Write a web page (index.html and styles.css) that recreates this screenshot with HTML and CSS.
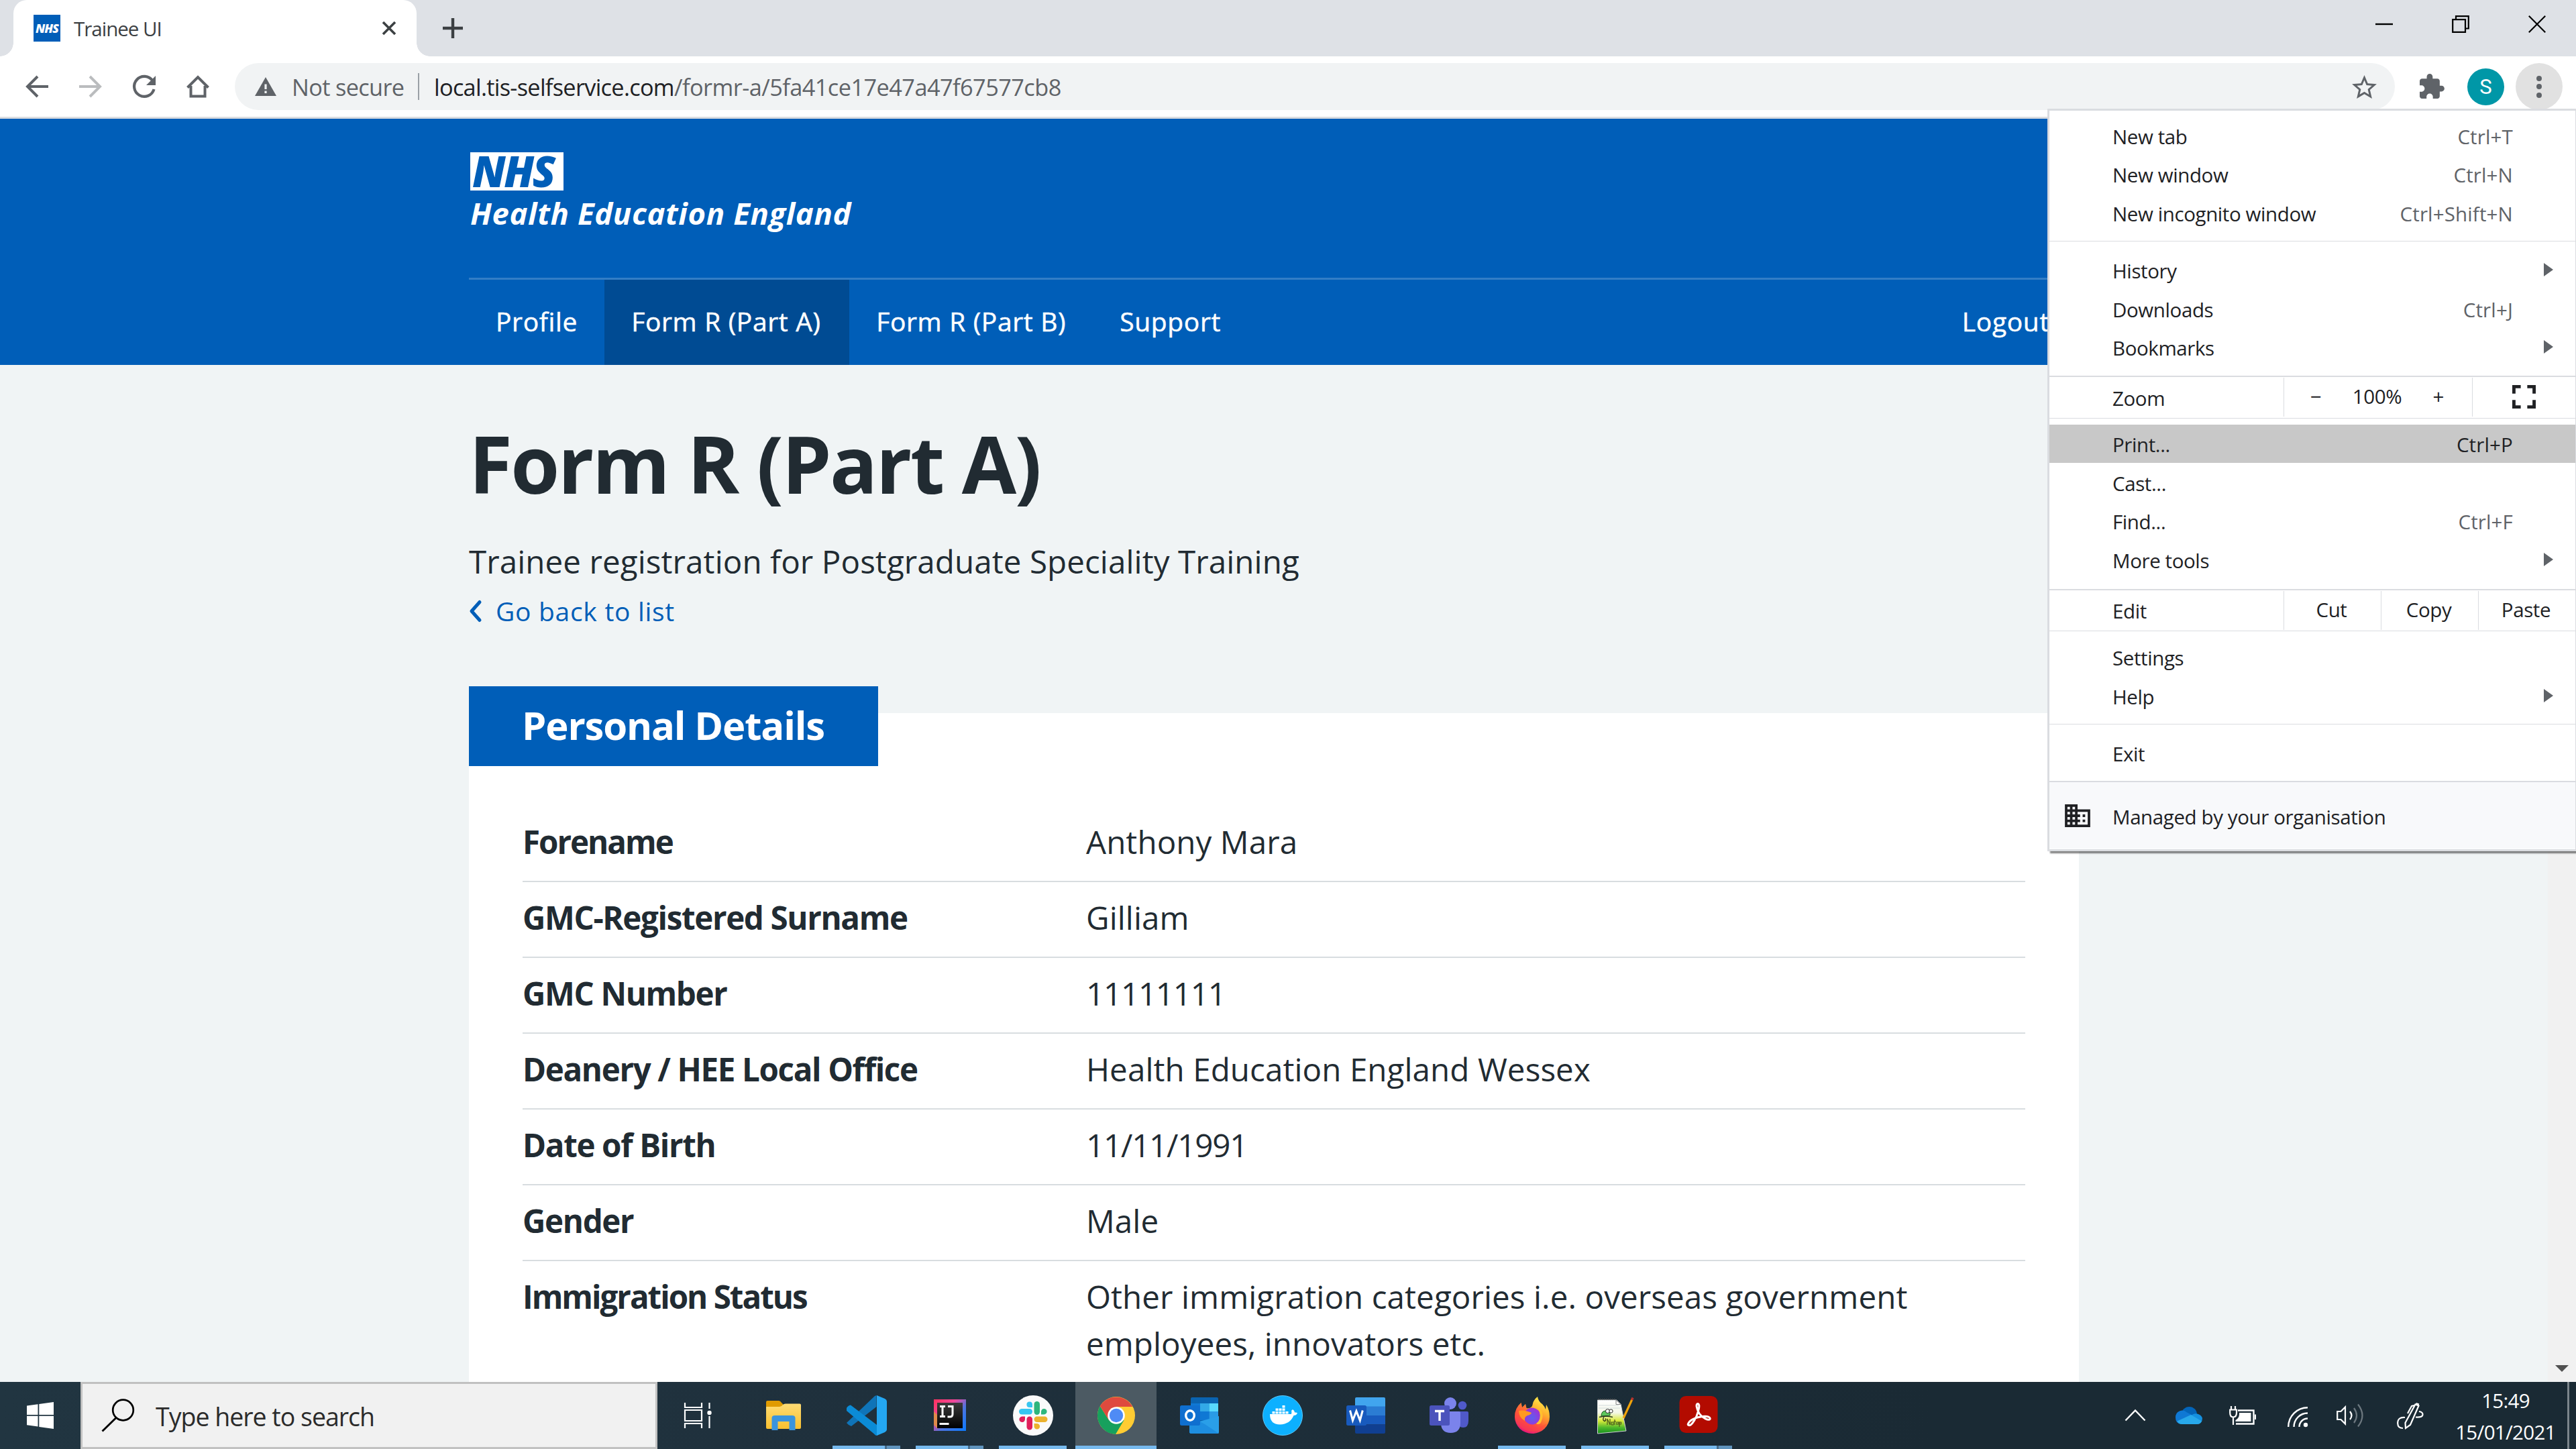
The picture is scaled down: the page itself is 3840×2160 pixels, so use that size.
FILE: index.html
```html
<!DOCTYPE html>
<html lang="en">
<head>
<meta charset="utf-8">
<title>Trainee UI</title>
<link rel="stylesheet" href="styles.css">
</head>
<body>
<header class="tabstrip">
  <div class="tab">
    <span class="favicon">NHS</span>
    <span class="tab-title">Trainee UI</span>
    <svg class="tab-close" viewBox="0 0 20 20"><path d="M1 1 19 19M19 1 1 19" fill="none" stroke="#3c4043" stroke-width="3.6"/></svg>
  </div>
  <svg class="new-tab" viewBox="0 0 30 30"><path d="M15 0V30M0 15H30" fill="none" stroke="#3c4043" stroke-width="4.4"/></svg>
  <div class="window-controls">
    <svg viewBox="0 0 26 26"><path d="M0 13H26" fill="none" stroke="#000" stroke-width="2.4"/></svg>
    <svg viewBox="0 0 26 26"><path d="M1.2 6.2H20V24.8H1.2ZM6 6V1.2H24.8V19.5H20" fill="none" stroke="#000" stroke-width="2.2"/></svg>
    <svg viewBox="0 0 26 26"><path d="M.8.8 25.2 25.2M25.2.8.8 25.2" fill="none" stroke="#000" stroke-width="2.2"/></svg>
  </div>
</header>

<div class="toolbar">
  <svg class="tool" viewBox="0 0 34 34"><path d="M34 17H3M18 2 3 17 18 32" fill="none" stroke="#5f6368" stroke-width="4"/></svg>
  <svg class="tool" viewBox="0 0 34 34"><path d="M0 17H31M16 2 31 17 16 32" fill="none" stroke="#babcbe" stroke-width="4"/></svg>
  <svg class="tool" viewBox="0 0 34 34"><path d="M29.5 8.5A15 15 0 1 0 31.5 21" fill="none" stroke="#5f6368" stroke-width="4.2"/><path d="M34 1V15H20Z" fill="#5f6368"/></svg>
  <svg class="tool" viewBox="0 0 34 34"><path d="M6.5 16V31.5H27.5V16M1.5 18.5 17 3 32.500 18.500" fill="none" stroke="#5f6368" stroke-width="4"/></svg>
  <div class="omnibox">
    <svg class="warning" viewBox="0 0 32 28"><path d="M16 0 32 28H0Z" fill="#5f6368"/><path d="M16 10.500V18M16 20.500V24" stroke="#f1f3f4" stroke-width="3.2"/></svg>
    <span class="security">Not secure</span>
    <span class="divider"></span>
    <span class="domain">local.tis-selfservice.com</span><span class="path">/formr-a/5fa41ce17e47a47f67577cb8</span>
    <svg class="star" viewBox="2 2 20 19"><path fill="#5f6368" d="M22 9.240l-7.190-.620L12 2 9.190 8.630 2 9.240l5.460 4.730L5.820 21 12 17.270 18.180 21l-1.630-7.030L22 9.240zM12 15.400l-3.760 2.270 1-4.280-3.320-2.880 4.380-.380L12 6.100l1.710 4.040 4.380.380-3.320 2.880 1 4.280L12 15.400z"/></svg>
  </div>
  <svg class="puzzle" viewBox="2 1.500 20.500 20.500"><path fill="#5f6368" d="M20.500 11H19V7c0-1.100-.900-2-2-2h-4V3.500C13 2.120 11.880 1 10.500 1S8 2.120 8 3.500V5H4c-1.100 0-1.990.900-1.990 2v3.800H3.500c1.490 0 2.700 1.210 2.700 2.700s-1.210 2.700-2.700 2.700H2V20c0 1.100.900 2 2 2h3.800v-1.500c0-1.490 1.210-2.700 2.700-2.700 1.490 0 2.700 1.210 2.700 2.700V22H17c1.100 0 2-.900 2-2v-4h1.500c1.380 0 2.500-1.120 2.500-2.500S21.880 11 20.500 11z"/></svg>
  <span class="avatar">S</span>
  <span class="kebab"><i></i><i></i><i></i></span>
</div>

<main class="page">
  <div class="page-scroll">
    <div class="masthead">
      <div class="container">
        <div class="brand">
          <span class="nhs-logo">NHS</span>
          <span class="org">Health Education England</span>
        </div>
        <nav class="nav">
          <a class="nav-item">Profile</a>
          <a class="nav-item current">Form R (Part A)</a>
          <a class="nav-item">Form R (Part B)</a>
          <a class="nav-item">Support</a>
          <a class="nav-item logout">Logout</a>
        </nav>
      </div>
    </div>
    <div class="container content">
      <h1>Form R (Part A)</h1>
      <p class="lead">Trainee registration for Postgraduate Speciality Training</p>
      <a class="back"><svg viewBox="0 0 19 32"><path d="M16 2.500 4 16 16 29.500" fill="none" stroke="#005eb8" stroke-width="5" stroke-linecap="round" stroke-linejoin="round"/></svg>Go back to list</a>
      <section class="card">
        <h2>Personal Details</h2>
        <dl class="summary">
          <div><dt class="snug">Forename</dt><dd>Anthony Mara</dd></div>
          <div><dt>GMC-Registered Surname</dt><dd>Gilliam</dd></div>
          <div><dt>GMC Number</dt><dd class="num">11111111</dd></div>
          <div><dt>Deanery / HEE Local Office</dt><dd>Health Education England Wessex</dd></div>
          <div><dt>Date of Birth</dt><dd class="num">11/11/1991</dd></div>
          <div><dt>Gender</dt><dd>Male</dd></div>
          <div><dt class="snug">Immigration Status</dt><dd>Other immigration categories i.e. overseas government<br>employees, innovators etc.</dd></div>
        </dl>
      </section>
    </div>
  </div>
  <div class="scrollbar"><svg viewBox="0 0 20 10"><path d="M0 0H20L10 10Z" fill="#505050"/></svg></div>
</main>

<div class="menu">
  <div class="group first">
    <div class="item">New tab<kbd>Ctrl+T</kbd></div>
    <div class="item">New window<kbd>Ctrl+N</kbd></div>
    <div class="item">New incognito window<kbd>Ctrl+Shift+N</kbd></div>
  </div>
  <div class="group">
    <div class="item">History<i class="arrow"></i></div>
    <div class="item">Downloads<kbd>Ctrl+J</kbd></div>
    <div class="item">Bookmarks<i class="arrow"></i></div>
  </div>
  <div class="split zoom">
    <span class="label">Zoom</span>
    <span class="cell level"><b>−</b><b>100%</b><b>+</b></span>
    <span class="cell full"><svg viewBox="0 0 36 36"><path d="M2.500 13V2.500H13M23 2.500H33.500V13M33.500 23V33.500H23M13 33.500H2.500V23" fill="none" stroke="#202124" stroke-width="5"/></svg></span>
  </div>
  <div class="group tight">
    <div class="item hover">Print...<kbd>Ctrl+P</kbd></div>
    <div class="item">Cast...</div>
    <div class="item">Find...<kbd>Ctrl+F</kbd></div>
    <div class="item">More tools<i class="arrow"></i></div>
  </div>
  <div class="split edit">
    <span class="label">Edit</span>
    <span class="cell">Cut</span><span class="cell">Copy</span><span class="cell">Paste</span>
  </div>
  <div class="group settings">
    <div class="item">Settings</div>
    <div class="item">Help<i class="arrow"></i></div>
  </div>
  <div class="group">
    <div class="item">Exit</div>
  </div>
  <div class="managed">
    <svg viewBox="2 3 20 18"><path fill="#202124" d="M12 7V3H2v18h20V7H12zM6 19H4v-2h2v2zm0-4H4v-2h2v2zm0-4H4V9h2v2zm0-4H4V5h2v2zm4 12H8v-2h2v2zm0-4H8v-2h2v2zm0-4H8V9h2v2zm0-4H8V5h2v2zm10 12h-8v-2h2v-2h-2v-2h2v-2h-2V9h8v10zm-2-8h-2v2h2v-2zm0 4h-2v2h2v-2z"/></svg>
    Managed by your organisation
  </div>
</div>

<footer class="taskbar">
  <div class="start"><svg viewBox="0 0 40 40"><path fill="#fff" d="M0 5.500 16.500 3.200V19H0ZM18.300 2.900 40 0V19H18.300ZM0 20.800H16.500V36.600L0 34.300ZM18.300 20.800H40V40L18.300 36.900Z"/></svg></div>
  <div class="search">
    <svg viewBox="0 0 50 50"><circle cx="32.500" cy="17" r="15.300" fill="none" stroke="#000" stroke-width="2.700"/><path d="M22 28.500 1.500 48.500" stroke="#000" stroke-width="2.900"/></svg>
    <span>Type here to search</span>
  </div>
  <div class="apps">
    <div class="app">
      <svg viewBox="0 0 60 60"><g fill="none" stroke="#fff" stroke-width="2.200"><path d="M9 11V18H34V11M9 49V42H34V49M9 22H34V38H9ZM45.500 11V20M45.500 31V49"/></g><circle cx="45.500" cy="26" r="3.200" fill="#fff"/></svg>
    </div>
    <div class="app">
      <svg viewBox="0 0 60 60"><defs><linearGradient id="fold" x1="0" y1="0" x2="0" y2="1"><stop offset="0" stop-color="#ffdc74"/><stop offset="1" stop-color="#f9c02f"/></linearGradient></defs><path d="M4 10Q4 8 6 8H23Q25 8 27 11L29 13V22H4Z" fill="#e09b00"/><path d="M4 17H24Q27 17 29 14 30 12.500 33 12.500H54Q56 12.500 56 14.500V48Q56 50 54 50H6Q4 50 4 48Z" fill="url(#fold)"/><path d="M12.500 52V34Q12.500 30 17 30H43Q47.500 30 47.500 34V52H38.500V39H21.500V52Z" fill="#3a94dd"/></svg>
    </div>
    <div class="app open stacked">
      <svg viewBox="0 0 60 60"><path d="M0 41 42 1 44.500 0V17L7 46Q3 45 0 41Z" fill="#0f74b8"/><path d="M0 19Q2 15 6 14.500L45 44V60Q43 60 41 57.500L0 23Z" fill="#0b8bd6"/><path d="M45 0 57 5Q60 6.500 60 9V51Q60 53.500 57 55L45 60Z" fill="#24a7f2"/></svg>
    </div>
    <div class="app open stacked">
      <svg viewBox="0 0 60 60"><defs><linearGradient id="ij" x1="0" y1="0" x2="1" y2="1"><stop offset="0" stop-color="#fe315d"/><stop offset=".35" stop-color="#f0489a"/><stop offset=".6" stop-color="#4d74e0"/><stop offset="1" stop-color="#0a7bff"/></linearGradient><linearGradient id="ijb" x1="0" y1="0" x2="0" y2="1"><stop offset="0" stop-color="#3a3a3a"/><stop offset="1" stop-color="#000"/></linearGradient></defs><path d="M6 6H54V53H6Z" fill="url(#ij)"/><path d="M6 24 12 30V50L6 44Z" fill="#e08a4a"/><path d="M11 11H49V49H11Z" fill="url(#ijb)"/><path d="M15 16.500H23M19 16.500V31.500M15 31.500H23M27 16.500H34V28Q34 32 30 32H26.500" fill="none" stroke="#fff" stroke-width="3"/><path d="M14.500 41H28.500V44H14.500Z" fill="#fff"/></svg>
    </div>
    <div class="app open">
      <svg viewBox="0 0 60 60"><circle cx="30" cy="30" r="30" fill="#fafafa"/><g fill="#36c5f0"><rect x="9" y="20" width="20" height="8.500" rx="4.200"/><path d="M29 18V13.500A4.300 4.300 0 1 0 24.700 18Z"/></g><g fill="#2eb67d"><rect x="31.500" y="9" width="8.500" height="20" rx="4.200"/><path d="M42 28.500H46.500A4.300 4.300 0 1 0 42 24.300Z"/></g><g fill="#ecb22e"><rect x="31.500" y="31.500" width="20" height="8.500" rx="4.200"/><path d="M31.500 42V46.500A4.300 4.300 0 1 0 35.700 42Z"/></g><g fill="#e01e5a"><rect x="20.500" y="31.500" width="8.500" height="20" rx="4.200"/><path d="M18 31.500H13.500A4.300 4.300 0 1 0 18 35.700Z"/></g></svg>
    </div>
    <div class="app open active">
      <svg viewBox="0 0 60 60"><circle cx="30" cy="30" r="28" fill="#fc3"/><path d="M5.750 16A28 28 0 0 0 29 58L41.500 37 18.700 36.500Z" fill="#17a05d"/><path d="M30 30 18.700 36.500 5.750 16A28 28 0 0 1 54.250 17H30Z" fill="#df4a3e"/><circle cx="30" cy="30" r="12.800" fill="#fff"/><circle cx="30" cy="30" r="10.200" fill="#4f8bf5"/></svg>
    </div>
    <div class="app">
      <svg viewBox="0 0 60 60"><rect x="17" y="3" width="41" height="40" rx="2" fill="#0a63b0"/><path d="M17 12H31V36H17Z" fill="#0f78d4"/><path d="M31 12H44.500V24H31Z" fill="#32a9e7"/><path d="M44.500 12H58V24H44.500Z" fill="#58d9fd"/><path d="M31 24H44.500V37H31Z" fill="#0f78d4"/><path d="M44.500 24H58V37H44.500Z" fill="#2a9be6"/><path d="M16 34 38 43 59 31V40L38 48Z" fill="#0a4a8c"/><path d="M59 31V55Q59 57 57 57H18Q15 57 15 54V43Z" fill="#2a9fe8"/><path d="M38 43 59 57H18Q15 57 15 54V31Z" fill="#1e8ee0"/><rect x="1" y="15" width="30" height="30" rx="2.500" fill="#0f6fd0"/><ellipse cx="16" cy="30" rx="6.300" ry="7.300" fill="none" stroke="#fff" stroke-width="3.400"/></svg>
    </div>
    <div class="app">
      <svg viewBox="0 0 60 60"><circle cx="30" cy="30" r="29.500" fill="#0db0ff" stroke="#5cc8fb"/><path d="M11 28H43Q44 25 43 23L45 21Q48 23 48 25.500 50.500 25 52 26.500 50.500 30 46.500 30 41 43 26 43.500 11 43.500 11 28Z" fill="#fff"/><path d="M14.500 24H18.500V27.500H14.500ZM19.500 24H23.500V27.500H19.500ZM24.500 24H28.500V27.500H24.500ZM29.500 24H33.500V27.500H29.500ZM34.500 24H38.500V27.500H34.500ZM19.500 19.500H23.500V23H19.500ZM24.500 19.500H28.500V23H24.500ZM29.500 19.500H33.500V23H29.500ZM29.500 15H33.500V18.500H29.500Z" fill="#fff"/></svg>
    </div>
    <div class="app">
      <svg viewBox="0 0 60 60"><path d="M14 5Q14 3 16 3H57Q59 3 59 5V17H14Z" fill="#41a5ee"/><path d="M14 16.500H59V30H14Z" fill="#2b7cd3"/><path d="M14 30H59V43.500H14Z" fill="#185abd"/><path d="M14 43.500H59V55Q59 57 57 57H16Q14 57 14 55Z" fill="#103f91"/><rect x="1" y="15" width="30" height="30" rx="2.500" fill="#185abd"/><path d="M6.500 22.500 10.500 37.500 15.900 23.500 21.300 37.500 25.300 22.500" fill="none" stroke="#fff" stroke-width="3"/></svg>
    </div>
    <div class="app">
      <svg viewBox="0 0 60 60"><circle cx="50" cy="15" r="6.300" fill="#5059c9"/><path d="M40 24H57Q59 24 59 26V38Q59 48 51 48 44 48 42 40Z" fill="#5059c9"/><circle cx="32" cy="12" r="9" fill="#7b83eb"/><path d="M18 24H45Q47 24 47 26V41Q47 56 32.500 56 18 56 18 41Z" fill="#7b83eb"/><rect x="1" y="15" width="30" height="30" rx="2.500" fill="#4b53bc"/><path d="M9 23.500H23M16 23.500V38" fill="none" stroke="#fff" stroke-width="3.400"/></svg>
    </div>
    <div class="app open">
      <svg viewBox="0 0 60 60"><defs><linearGradient id="ff" x1=".8" y1="0" x2=".3" y2="1"><stop offset="0" stop-color="#fff44f"/><stop offset=".35" stop-color="#ffb02e"/><stop offset=".65" stop-color="#ff5a36"/><stop offset="1" stop-color="#e6137f"/></linearGradient><radialGradient id="ffc" cx=".5" cy=".6"><stop offset="0" stop-color="#5b5ff0"/><stop offset="1" stop-color="#9a35d8"/></radialGradient></defs><path d="M4 32Q4 19 13.500 11L15 18 20 13 21.500 19Q27 20 30 16 31 7 38 2 39 9 45 13 49 17 50 21L51 14Q56 22 56 32A26 25 0 0 1 4 32Z" fill="url(#ff)"/><path d="M4 32Q4 19 13.500 11L15 18 20 13 21.500 19 24 22V42L36 50 52 42A26 25 0 0 1 4 32Z" fill="#ff4a3d" opacity=".45"/><circle cx="30" cy="31" r="12.500" fill="url(#ffc)"/><path d="M10 23Q18 21 29 26 28 29 23 30 18 32 19 38 10 33 10 23Z" fill="#ff9a22"/><path d="M40 18Q50 28 42 42 38 44 36 42 44 36 41 25Z" fill="#ffc02e"/></svg>
    </div>
    <div class="app open">
      <svg viewBox="0 0 60 60"><defs><linearGradient id="np" x1="0" y1="0" x2="0" y2="1"><stop offset="0" stop-color="#fff"/><stop offset=".38" stop-color="#f4f7e8"/><stop offset=".62" stop-color="#d8ea3a"/><stop offset=".82" stop-color="#4fb82c"/><stop offset="1" stop-color="#14901d"/></linearGradient></defs><path d="M3.500 7H32L38 13 46 53 3.500 57Z" fill="url(#np)" stroke="#cfd3d3"/><path d="M4 6H31" stroke="#555" stroke-width="1.800" stroke-dasharray="1.500 1.500"/><path d="M31 7V13.500H38Z" fill="#fff" stroke="#666" stroke-width=".8"/><path d="M5 15H35M5 19H37" stroke="#c9d4d8" stroke-width=".8"/><path d="M9 31Q9 23 16 23 23 23 22 30Z" fill="#5cc65c" stroke="#1c5a22"/><circle cx="18.500" cy="23.500" r="3" fill="#fff" stroke="#222"/><circle cx="23.500" cy="23.500" r="2.600" fill="#fff" stroke="#222"/><path d="M6 32.500Q16 30 26 32.500M13 32Q10 37 14 38.500 17 37 15 34.500" fill="none" stroke="#2c3a1c" stroke-width="1.400"/><path d="M18 44V35L22 44V35M24 44V40H27V44H24M29 36V44M27.500 39H31M32 43H35V40H32V44M36 47V40H38.500V43H36" fill="none" stroke="#4a5a1c" stroke-width="1.200"/><path d="M42 34 55 6" stroke="#f0a30a" stroke-width="3.200"/><path d="M54.500 7 56 3.500" stroke="#b8322c" stroke-width="3.400"/><path d="M41 37 41.500 33 43.500 34.500Z" fill="#e8d2a0"/></svg>
    </div>
    <div class="app open stacked">
      <svg viewBox="0 0 60 60"><rect x="1.500" y="1" width="57" height="55" rx="9.500" fill="#b30b00"/><path d="M14.500 42.500C17 36 26 33 36 31.500 44 30.500 48 33 47 35.500 45 38 36 34 31 27 27 20 25.500 12.500 29 12.500 32.500 13 30.500 22 27 31 23 40 18 46 15 44.500 14 44 14 43.500 14.500 42.500Z" fill="none" stroke="#fff" stroke-width="3"/></svg>
    </div>
  </div>
  <div class="tray">
    <svg class="t-chev" viewBox="0 0 32 18"><path d="M1.500 16.500 16 1.500 30.500 16.500" fill="none" stroke="#fff" stroke-width="2.400"/></svg>
    <svg class="t-cloud" viewBox="0 0 40 26"><circle cx="20.500" cy="11.500" r="11.500" fill="#0364b8"/><path d="M0 16A10 10 0 0 1 17 8.500L30 15 8 25.500Q0 25 0 16Z" fill="#0f78d4"/><path d="M24 12.500A10 9.500 0 0 1 40 17Q40 25 33 26L20 16Z" fill="#1490df"/><path d="M2.500 21.500 23 12 39 21.500Q37 26 32 26H9Q4.500 26 2.500 21.500Z" fill="#28a8ea"/></svg>
    <svg class="t-batt" viewBox="0 0 40 28"><path d="M13 6.500H36.500V26.500H10" fill="none" stroke="#fff" stroke-width="2.400"/><path d="M38 12.500H40V20H38Z" fill="#fff"/><path d="M15 10H32.500V23H9.500V21Q15 18 15 12Z" fill="#fff"/><path d="M3 0V5M9 0V5M1.200 5.500H11V10Q11 16.500 6 16.500 1.200 16.500 1.200 10ZM6 17V28" fill="none" stroke="#fff" stroke-width="2.200"/></svg>
    <svg class="t-wifi" viewBox="0 0 30 30"><g fill="none" stroke="#fff" stroke-width="2.400"><path d="M1.200 30A28.800 28.800 0 0 1 30 1.200M9.500 30A20.500 20.500 0 0 1 30 9.500M17.500 30A12.500 12.500 0 0 1 30 17.500"/></g><circle cx="27" cy="27" r="3.200" fill="#fff"/></svg>
    <svg class="t-vol" viewBox="0 0 40 36"><path d="M1.200 12H6.500L13 5.500V30.500L6.500 24H1.200Z" fill="none" stroke="#fff" stroke-width="2.200"/><path d="M20 12Q25 18 20 24" fill="none" stroke="#fff" stroke-width="2.200"/><path d="M26 7Q34 18 26 29M32 1.500Q45 18 32 34.500" fill="none" stroke="#6c777e" stroke-width="2.200"/></svg>
    <svg class="t-pen" viewBox="0 0 40 40"><g fill="none" stroke="#fff" stroke-width="2.200"><path d="M27.500 3.500 32.500 5.500 20 34 13 39 12.500 31ZM28.500 2 33 3.500M16 17 22 6 26 5"/><path d="M12 23Q1 22 1.200 32 1.500 39 9 39M33 14Q39 15 38.500 19 38 23 28 22.500"/></g></svg>
    <div class="clock"><span>15:49</span><span>15/01/2021</span></div>
    <span class="peek"></span>
  </div>
</footer>
</body>
</html>
```
FILE: styles.css
```css
* { box-sizing: border-box; }

body {
  margin: 0;
  width: 3840px;
  height: 2160px;
  overflow: hidden;
  display: grid;
  grid-template-rows: 84px 93px 1fr 100px;
  position: relative;
  font-family: "Open Sans", "Noto Sans", sans-serif;
  color: #212b32;
  background: #fff;
}

svg { display: block; flex: none; overflow: visible; }
h1, h2, p, dl, dd { margin: 0; }

/* Tab strip */
.tabstrip {
  background: #dee1e6;
  display: flex;
  align-items: center;
  padding-left: 20px;
}
.tab {
  width: 601px;
  height: 84px;
  padding: 0 31px 0 30px;
  display: flex;
  align-items: center;
  position: relative;
  background: #fff;
  border-radius: 20px 20px 0 0;
}
.tab::before, .tab::after {
  content: "";
  position: absolute;
  bottom: 0;
  width: 20px;
  height: 20px;
}
.tab::before { left: -20px; background: radial-gradient(circle at 0 0, #dee1e6 19.5px, #fff 20px); }
.tab::after { right: -20px; background: radial-gradient(circle at 100% 0, #dee1e6 19.5px, #fff 20px); }
.favicon {
  width: 40px;
  height: 40px;
  margin-right: 20px;
  background: #005eb8;
  color: #fff;
  font: italic 800 18px/40px "Open Sans", sans-serif;
  letter-spacing: -1px;
  text-align: center;
}
.tab-title { font-size: 29.5px; letter-spacing: -1px; color: #3c4043; }
.tab-close { width: 20px; height: 20px; margin-left: auto; }
.new-tab { width: 30px; height: 30px; margin-left: 39px; }
.window-controls {
  margin: -12px 45px 0 auto;
  display: flex;
  gap: 88px;
}
.window-controls svg { width: 26px; height: 26px; }

/* Toolbar */
.toolbar {
  border-bottom: 3px solid #dadce0;
  display: flex;
  align-items: center;
  padding-left: 38px;
}
.tool { width: 34px; height: 34px; margin-right: 46px; }
.omnibox {
  width: 3220px;
  height: 70px;
  margin-left: -8px;
  padding: 0 27px 0 30px;
  display: flex;
  align-items: center;
  border-radius: 35px;
  background: #f1f3f4;
  font-size: 34.3px;
  color: #5f6368;
}
.warning { width: 32px; height: 28px; margin-right: 23px; }
.security { letter-spacing: -.65px; width: 188px; }
.divider { width: 2px; height: 40px; margin-right: 22px; background: #9aa0a6; }
.domain { color: #202124; letter-spacing: -.7px; }
.path { letter-spacing: -.55px; }
.star { width: 37px; height: 35px; margin-left: auto; }
.puzzle { width: 36px; height: 36px; margin-left: 37px; }
.avatar {
  width: 55px;
  height: 55px;
  margin-left: 35px;
  border-radius: 50%;
  background: #0097a7;
  color: #fff;
  font: 400 31px/55px Roboto, sans-serif;
  text-align: center;
}
.kebab {
  width: 70px;
  height: 70px;
  margin-left: 17px;
  border-radius: 50%;
  background: #e1e1e1;
  display: flex;
  flex-direction: column;
  align-items: center;
  justify-content: center;
  gap: 4.500px;
}
.kebab i { width: 8px; height: 8px; border-radius: 50%; background: #5f6368; }

/* Page */
.page { display: flex; min-height: 0; overflow: hidden; background: #f0f4f5; }
.page-scroll { flex: 1; overflow: hidden; }
.container { width: 2400px; margin-left: 699px; }
.masthead { height: 367px; background: #005eb8; color: #fff; }
.brand {
  height: 237px;
  padding: 50px 0 0 2px;
  display: flex;
  flex-direction: column;
  align-items: flex-start;
}
.nhs-logo {
  width: 139px;
  height: 57px;
  padding-left: 3px;
  overflow: hidden;
  background: #fff;
  color: #005eb8;
  font: italic 800 63px/55px "Open Sans", sans-serif;
  letter-spacing: -2.500px;
}
.org { margin-top: 2px; font: italic 700 45.5px/62px "Open Sans", sans-serif; letter-spacing: .6px; }
.nav {
  height: 130px;
  border-top: 3px solid #337ec6;
  display: flex;
  font-size: 39px;
  letter-spacing: .65px;
  -webkit-text-stroke: .5px #fff;
}
.nav-item { padding: 0 40px; line-height: 124px; }
.nav-item.current { width: 365px; background: #004b93; }
.logout { margin: 0 4px 0 auto; }

.content { padding-top: 77px; }
h1 { font-size: 118px; line-height: 140px; font-weight: 700; letter-spacing: -2.500px; }
.lead { margin-top: 41px; font-size: 47.5px; line-height: 70px; letter-spacing: .1px; }
.back {
  margin-top: 9px;
  display: flex;
  align-items: center;
  color: #005eb8;
  font-size: 39px;
  line-height: 60px;
  letter-spacing: .7px;
}
.back svg { width: 19px; height: 32px; margin-right: 21px; }
.card { margin-top: 122px; height: 1200px; background: #fff; display: flex; flex-direction: column; }
h2 {
  width: 610px;
  height: 119px;
  margin: -40px 0 60px;
  padding-left: 79px;
  background: #005eb8;
  color: #fff;
  font-size: 58px;
  line-height: 115px;
  font-weight: 700;
  letter-spacing: -1.150px;
}
.summary { margin: 0 80px; font-size: 47.5px; line-height: 70px; }
.summary > div {
  padding: 18px 0 23px;
  border-bottom: 2px solid #d8dde0;
  display: grid;
  grid-template-columns: 840px 1fr;
  white-space: nowrap;
}
dt { font-weight: 700; letter-spacing: -1.350px; }
dt.snug { letter-spacing: -2px; }
dd { letter-spacing: .1px; }
dd.num { letter-spacing: -1.200px; }
.scrollbar {
  width: 42px;
  background: #f1f1f1;
  display: flex;
  align-items: flex-end;
  justify-content: center;
  padding-bottom: 15px;
}
.scrollbar svg { width: 20px; height: 10px; }

/* Browser menu */
.menu {
  position: absolute;
  left: 3052px;
  top: 162px;
  width: 788px;
  height: 1107px;
  border: 3px solid #dadce0;
  border-right-width: 1px;
  background: #fff;
  box-shadow: 4px 3px 2px rgba(0, 0, 0, .5);
  font-size: 29.500px;
  letter-spacing: -.400px;
  color: #202124;
}
.group { padding: 13.500px 0; border-top: 1.500px solid #dadce0; }
.group.first { border-top: 0; padding-top: 8px; }
.group.tight { padding: 9px 0 15px; }
.group.settings { padding: 10px 0 13px; }
.item {
  height: 57.500px;
  padding: 3px 93px 0 94px;
  display: flex;
  align-items: center;
  position: relative;
}
.item.hover { background: #c8c8c8; }
kbd { margin-left: auto; font: inherit; letter-spacing: .15px; color: #5f6368; }
.hover kbd { color: #202124; }
.arrow {
  margin: -3px -60px 0 auto;
  border-left: 14px solid #5f6368;
  border-top: 10px solid transparent;
  border-bottom: 10px solid transparent;
}
.split { height: 63px; border-top: 2px solid #dadce0; display: flex; }
.split.edit { height: 62px; }
.split .label { width: 349px; padding: 2px 0 0 94px; line-height: 60px; }
.split.edit .label { padding-top: 1px; }
.cell {
  height: 58px;
  margin-top: 1px;
  padding-right: 3px;
  border-left: 1.500px solid #dadce0;
  flex: 1;
  line-height: 56px;
  text-align: center;
}
.cell.level { flex: 0 0 281px; display: flex; justify-content: space-between; padding: 0 42px 0 39px; }
.cell.full { display: flex; align-items: center; padding-left: 59px; }
.cell.full svg { width: 35px; height: 35px; }
.cell b { font-weight: 400; }
.managed {
  height: 101px;
  padding: 4px 0 0 23px;
  border-top: 2px solid #dadce0;
  background: #f8f9fb;
  display: flex;
  align-items: center;
}
.managed svg { width: 38px; height: 34px; margin: -3px 33px 0 0; }

/* Taskbar */
.taskbar {
  background: linear-gradient(90deg, #213541, #1f303c 35%, #1a2a34 75%);
  display: flex;
}
.start { width: 120px; display: flex; align-items: center; justify-content: center; }
.start svg { width: 40px; height: 40px; }
.search {
  width: 860px;
  border: 3px solid #c1c1c1;
  background: #f1f1f1;
  display: flex;
  align-items: center;
  padding-left: 28px;
  font-size: 37.500px;
  letter-spacing: -1px;
  color: #2b2b2b;
}
.search svg { width: 50px; height: 50px; margin-right: 31px; }
.search span { padding-top: 3px; }
.apps { display: flex; gap: 3px; }
.app {
  width: 121px;
  display: flex;
  align-items: center;
  justify-content: center;
  position: relative;
}
.app svg { width: 60px; height: 60px; }
.app.open::after {
  content: "";
  position: absolute;
  left: 10px;
  right: 10px;
  bottom: 0;
  height: 5px;
  background: #76b9ed;
}
.app.stacked::after { background: linear-gradient(90deg, #76b9ed 78px, #456b8a 78px 81px, #5f93bd 81px); }
.app.active { background: #4c5a63; }
.app.active::after { left: 0; right: 0; }
.apps .app:first-child { width: 124px; }
.tray { margin-left: auto; display: flex; align-items: center; padding-right: 10px; }
.t-chev { width: 32px; height: 18px; margin-right: 44px; }
.t-cloud { width: 40px; height: 26px; margin-right: 40px; }
.t-batt { width: 40px; height: 28px; margin-right: 47px; }
.t-wifi { width: 30px; height: 30px; margin: 4px 43px 0 0; }
.t-vol { width: 40px; height: 36px; margin-right: 50px; }
.t-pen { width: 40px; height: 40px; margin-right: 46px; }
.clock {
  width: 152px;
  margin-right: 16px;
  padding-top: 2px;
  display: flex;
  flex-direction: column;
  text-align: center;
  font-size: 29.500px;
  line-height: 47.500px;
  letter-spacing: -.7px;
  color: #fff;
}
.peek { width: 3px; height: 100px; background: #7b858b; }
```
